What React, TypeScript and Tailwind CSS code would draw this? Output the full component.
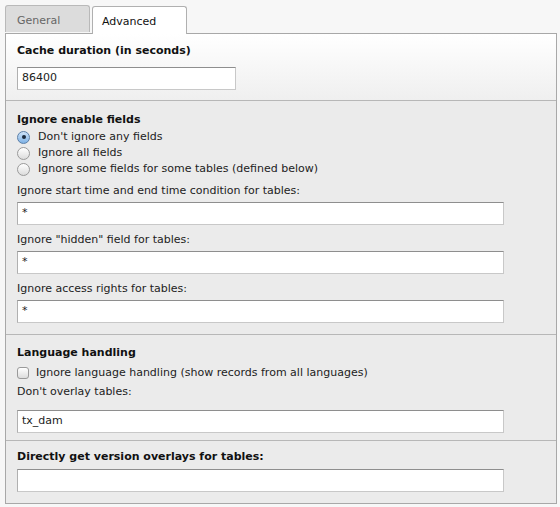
import React from "react";

const Radio: React.FC<{ checked?: boolean }> = ({ checked }) => (
  <span
    className={`relative inline-block w-[13px] h-[13px] rounded-full border ${
      checked
        ? "border-[#5b7fa8] bg-gradient-to-b from-[#cfe3f7] to-[#7fb2e5]"
        : "border-[#9a9a9a] bg-gradient-to-b from-[#ffffff] to-[#dcdcdc]"
    }`}
  >
    {checked && <span className="absolute left-[3.5px] top-[3.5px] w-[4px] h-[4px] rounded-full bg-[#1c2a3c]" />}
  </span>
);

const TextField: React.FC<{ value?: string; wide?: boolean }> = ({ value = "", wide = true }) => (
  <div
    className={`${wide ? "w-[487px]" : "w-[219px]"} h-[23px] bg-white border border-[#c8c8c8] border-t-[#8e8e8e] border-l-[#b0b0b0] px-[4px] flex items-center text-[11px] text-[#222]`}
  >
    {value}
  </div>
);

const Label: React.FC<{ children: React.ReactNode }> = ({ children }) => (
  <div className="h-[16px] leading-[16px] text-[11px] text-[#222]">{children}</div>
);

const Title: React.FC<{ children: React.ReactNode }> = ({ children }) => (
  <div className="h-[16px] leading-[16px] text-[11px] font-bold text-[#111]">{children}</div>
);

export default function App() {
  return (
    <div
      className="w-[560px] h-[507px] bg-[#f7f7f7] pt-[5px] pl-[5px] pr-[3px]"
      style={{ fontFamily: "Verdana, 'DejaVu Sans', sans-serif" }}
    >
      {/* Tabs */}
      <div className="flex items-end gap-[2px] h-[28px]">
        <div className="w-[85px] h-[27px] mb-[1px] rounded-t-[3px] border border-b-0 border-[#b9b9b9] bg-[#dcdcdc] text-[#666] text-[11px] pl-[11px] pt-[7px]">
          General
        </div>
        <div className="w-[95px] h-[28px] -mb-[1px] relative z-10 rounded-t-[3px] border border-b-0 border-[#b0b0b0] bg-white text-[#111] text-[11px] pl-[9px] pt-[7px]">
          Advanced
        </div>
      </div>

      {/* Panel */}
      <div className="w-[552px] border border-[#a8a8a8] bg-[#ebebeb]">
        <div className="h-[67px] bg-gradient-to-b from-[#ffffff] to-[#efefef] pl-[11px] pt-[9px] border-b border-[#b7b7b7]">
          <Title>Cache duration (in seconds)</Title>
          <div className="mt-[8px]">
            <TextField value="86400" wide={false} />
          </div>
        </div>

        <div className="h-[234px] pl-[11px] pt-[11px] border-b border-[#b7b7b7]">
          <Title>Ignore enable fields</Title>
          <div className="flex flex-col mt-[1px]">
            {[
              ["Don't ignore any fields", true],
              ["Ignore all fields", false],
              ["Ignore some fields for some tables (defined below)", false],
            ].map(([t, c]) => (
              <div key={t as string} className="h-[16px] flex items-center gap-[8px] text-[11px] text-[#222]">
                <Radio checked={c as boolean} />
                <span>{t as string}</span>
              </div>
            ))}
          </div>
          <div className="mt-[6px]">
            <Label>Ignore start time and end time condition for tables:</Label>
          </div>
          <div className="mt-[3px]">
            <TextField value="*" />
          </div>
          <div className="mt-[7px]">
            <Label>Ignore "hidden" field for tables:</Label>
          </div>
          <div className="mt-[3px]">
            <TextField value="*" />
          </div>
          <div className="mt-[7px]">
            <Label>Ignore access rights for tables:</Label>
          </div>
          <div className="mt-[3px]">
            <TextField value="*" />
          </div>
        </div>

        <div className="h-[106px] pl-[11px] pt-[10px] border-b border-[#b7b7b7]">
          <Title>Language handling</Title>
          <div className="mt-[4px] h-[16px] flex items-center gap-[7px] text-[11px] text-[#222]">
            <span className="inline-block w-[12px] h-[12px] rounded-[3px] border border-[#9a9a9a] bg-gradient-to-b from-[#ffffff] to-[#dcdcdc]" />
            <span>Ignore language handling (show records from all languages)</span>
          </div>
          <div className="mt-[3px]">
            <Label>Don't overlay tables:</Label>
          </div>
          <div className="mt-[10px]">
            <TextField value="tx_dam" />
          </div>
        </div>

        <div className="h-[62px] pl-[11px] pt-[8px]">
          <Title>Directly get version overlays for tables:</Title>
          <div className="mt-[4px]">
            <TextField />
          </div>
        </div>
      </div>
    </div>
  );
}
